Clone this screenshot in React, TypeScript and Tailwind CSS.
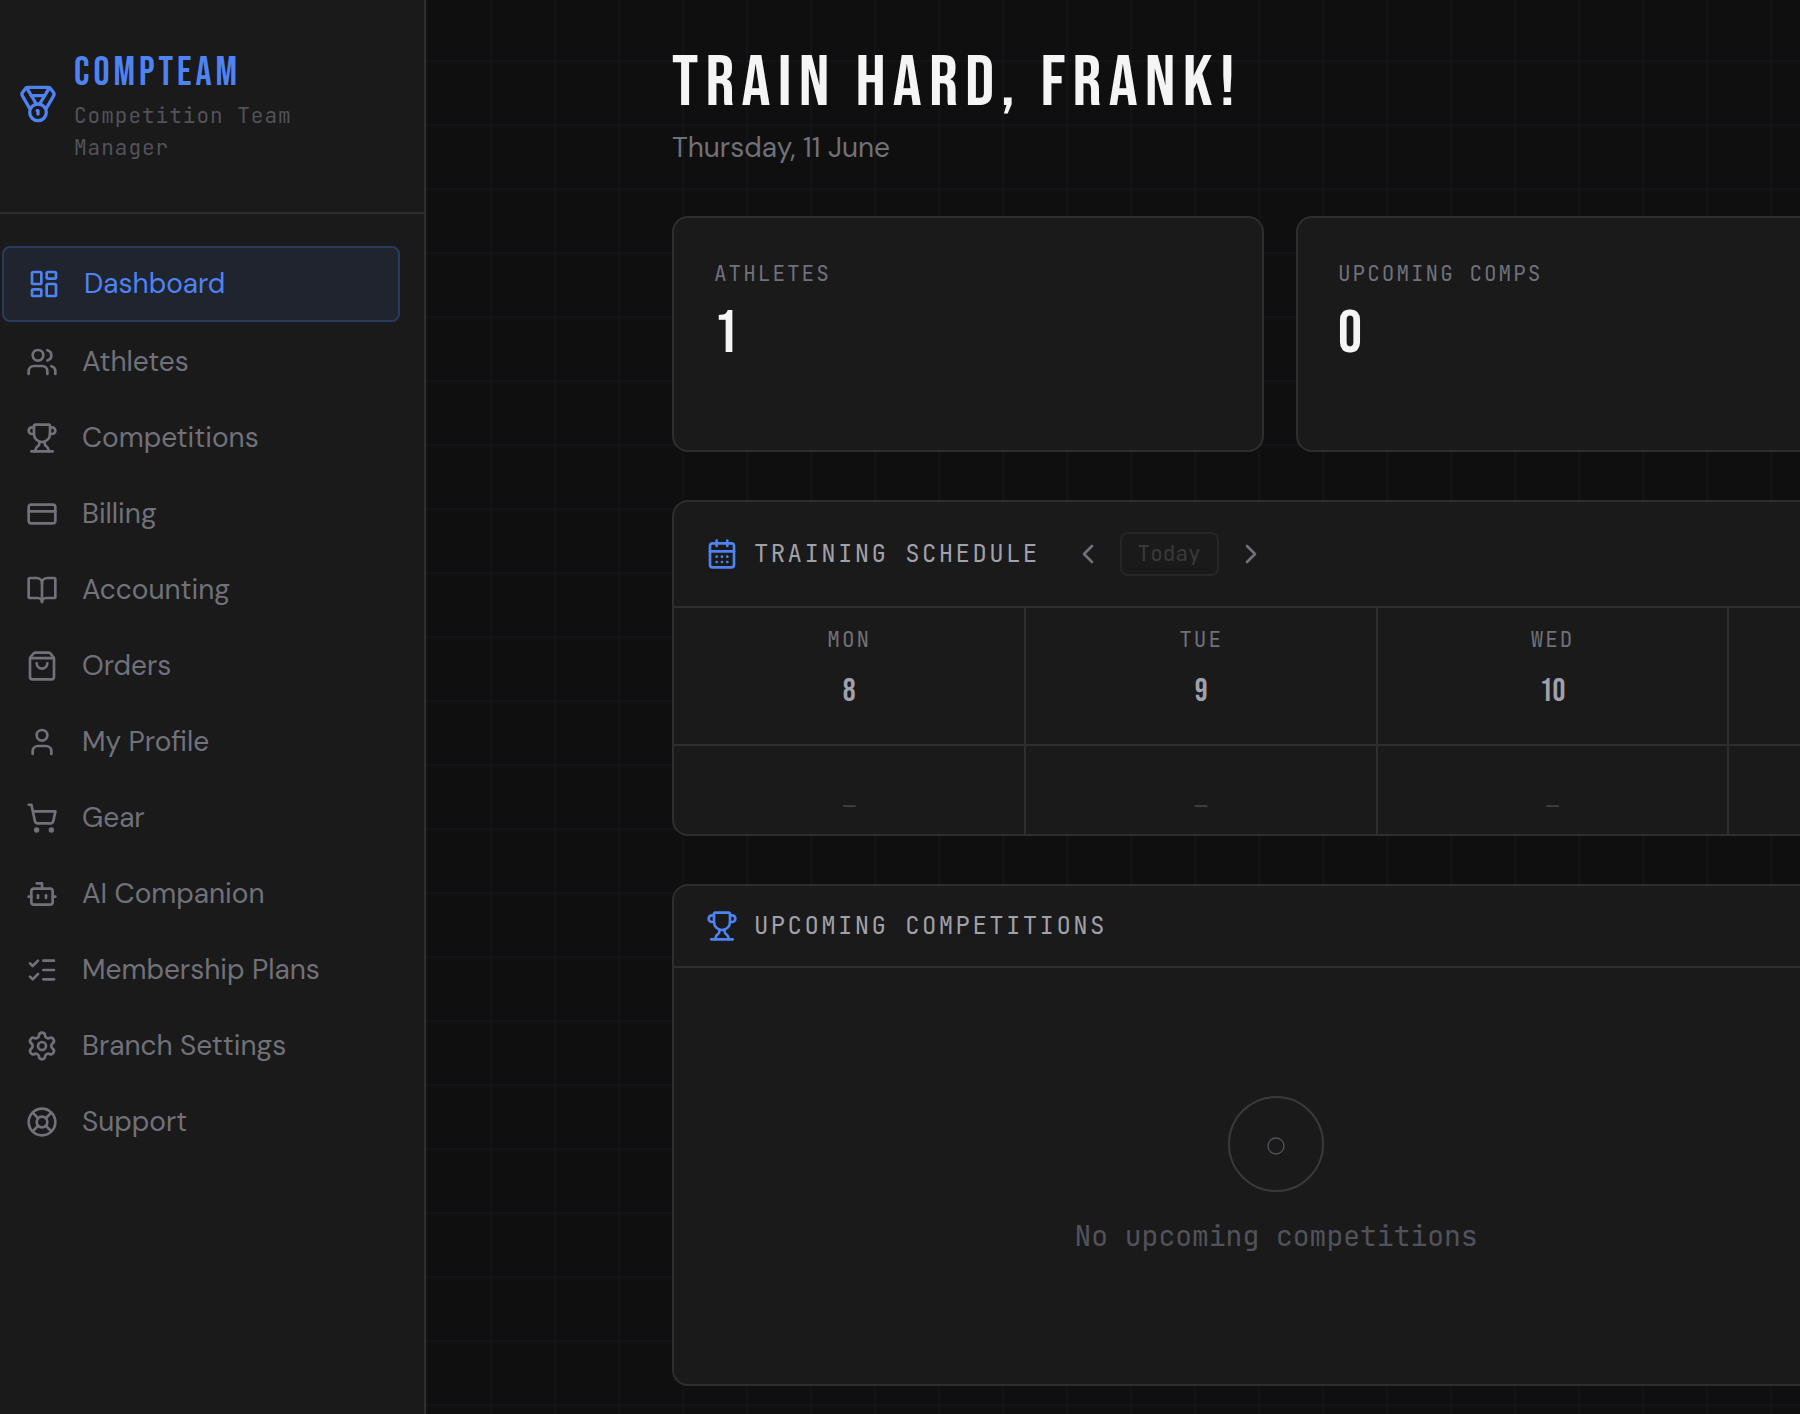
import {
  BookOpen,
  Bot,
  CalendarDays,
  ChevronLeft,
  ChevronRight,
  CreditCard,
  LayoutDashboard,
  LifeBuoy,
  ListChecks,
  Medal,
  Settings,
  ShoppingBag,
  ShoppingCart,
  Trophy,
  User,
  Users,
  type LucideIcon,
} from "lucide-react";

type NavItem = { label: string; icon: LucideIcon; active?: boolean };

const navItems: NavItem[] = [
  { label: "Dashboard", icon: LayoutDashboard, active: true },
  { label: "Athletes", icon: Users },
  { label: "Competitions", icon: Trophy },
  { label: "Billing", icon: CreditCard },
  { label: "Accounting", icon: BookOpen },
  { label: "Orders", icon: ShoppingBag },
  { label: "My Profile", icon: User },
  { label: "Gear", icon: ShoppingCart },
  { label: "AI Companion", icon: Bot },
  { label: "Membership Plans", icon: ListChecks },
  { label: "Branch Settings", icon: Settings },
  { label: "Support", icon: LifeBuoy },
];

const stats = [
  { label: "Athletes", value: 1 },
  { label: "Upcoming comps", value: 0 },
];

const days = [
  { day: "Mon", date: 8 },
  { day: "Tue", date: 9 },
  { day: "Wed", date: 10 },
];

function NavLink({ label, icon: Icon, active }: NavItem) {
  return (
    <a
      href="#"
      aria-current={active ? "page" : undefined}
      className={
        active
          ? "flex items-center gap-6 rounded-lg border-2 border-[#293a60] bg-[#20242f] px-6 py-5 text-[#4f83f1]"
          : "flex items-center gap-6 rounded-lg px-6 py-5 text-[#71717a]"
      }
    >
      <Icon className="size-8 shrink-0" />
      <span className="text-[28px] leading-8">{label}</span>
    </a>
  );
}

function Sidebar() {
  return (
    <aside className="w-[426px] shrink-0 border-r-2 border-[#2e2e2e] bg-[#1a1a1a]">
      <div className="flex items-center gap-4 border-b-2 border-[#2e2e2e] pt-11 pr-12 pb-12 pl-[18px]">
        <Medal className="size-10 shrink-0 text-[#4f83f1]" />
        <div>
          <p className="pt-0.5 font-['Bebas_Neue','Open_Sans_Condensed',sans-serif] text-[40px] leading-[54px] tracking-widest text-[#4f83f1]">
            COMPTEAM
          </p>
          <p className="font-['JetBrains_Mono','DejaVu_Sans_Mono',monospace] text-[21px] leading-8 tracking-[1px] text-[#52525b]">
            Competition Team Manager
          </p>
        </div>
      </div>
      <nav className="flex flex-col gap-1 pt-8 pr-6 pb-8 pl-0.5">
        {navItems.map((item) => (
          <NavLink key={item.label} {...item} />
        ))}
      </nav>
    </aside>
  );
}

function PanelTitle({ icon: Icon, title }: { icon: LucideIcon; title: string }) {
  return (
    <div className="flex items-center gap-4">
      <Icon className="size-8 shrink-0 text-[#4f83f1]" />
      <h2 className="font-['JetBrains_Mono','DejaVu_Sans_Mono',monospace] text-2xl tracking-widest text-[#a1a1aa] uppercase">
        {title}
      </h2>
    </div>
  );
}

function Schedule() {
  return (
    <section className="overflow-hidden rounded-2xl border-2 border-[#2e2e2e] bg-[#1a1a1a]">
      <header className="flex items-center gap-8 border-b-2 border-[#2e2e2e] px-8 py-[30px]">
        <PanelTitle icon={CalendarDays} title="Training Schedule" />
        <div className="flex items-center gap-4">
          <button type="button" aria-label="Previous week" className="text-[#71717a]">
            <ChevronLeft className="size-8" />
          </button>
          <button
            type="button"
            disabled
            className="h-11 rounded-lg border-2 border-[#262626] px-4 font-['JetBrains_Mono','DejaVu_Sans_Mono',monospace] text-[21px] leading-8 text-[#3a3a3c]"
          >
            Today
          </button>
          <button type="button" aria-label="Next week" className="text-[#71717a]">
            <ChevronRight className="size-8" />
          </button>
        </div>
      </header>
      <table className="w-full table-fixed">
        <thead>
          <tr className="border-b-2 border-[#2e2e2e]">
            {days.map(({ day, date }) => (
              <th key={day} scope="col" className="w-1/7 border-r-2 border-[#2e2e2e] pt-4 pb-7 font-normal">
                <span className="block font-['JetBrains_Mono','DejaVu_Sans_Mono',monospace] text-[21px] leading-8 tracking-[2px] text-[#71717a] uppercase">
                  {day}
                </span>
                <span className="mt-3 block font-['Bebas_Neue','Open_Sans_Condensed',sans-serif] text-[32px] leading-12 text-[#a1a1aa]">
                  {date}
                </span>
              </th>
            ))}
            <td />
          </tr>
        </thead>
        <tbody>
          <tr>
            {days.map(({ day }) => (
              <td
                key={day}
                className="border-r-2 border-[#2e2e2e] pt-11 pb-3 text-center font-['JetBrains_Mono','DejaVu_Sans_Mono',monospace] text-[21px] leading-8 text-[#3f3f46]"
              >
                —
              </td>
            ))}
            <td />
          </tr>
        </tbody>
      </table>
    </section>
  );
}

function UpcomingCompetitions() {
  return (
    <section className="overflow-hidden rounded-2xl border-2 border-[#2e2e2e] bg-[#1a1a1a]">
      <header className="border-b-2 border-[#2e2e2e] px-8 py-6">
        <PanelTitle icon={Trophy} title="Upcoming Competitions" />
      </header>
      <div className="flex flex-col items-center py-32">
        <div className="flex size-24 items-center justify-center rounded-full border-2 border-[#3a3a3a] pt-1 text-[#52525b]">
          <svg viewBox="0 0 18 18" className="size-[18px]" fill="none" stroke="currentColor" strokeWidth="1.3" aria-hidden="true">
            <circle cx="9" cy="9" r="8" />
          </svg>
        </div>
        <p className="mt-6 font-['JetBrains_Mono','DejaVu_Sans_Mono',monospace] text-[28px] leading-10 text-[#52525b]">
          No upcoming competitions
        </p>
      </div>
    </section>
  );
}

export default function App() {
  return (
    <div className="flex min-h-screen overflow-hidden bg-[#0f0f0f] font-['DM_Sans','Inter',sans-serif]">
      <Sidebar />
      <main className="min-w-0 flex-1 overflow-hidden bg-[linear-gradient(rgba(79,131,241,0.04)_2px,transparent_2px),linear-gradient(90deg,rgba(79,131,241,0.04)_2px,transparent_2px)] bg-size-[64px_64px] bg-position-[0px_-4px] pt-12 pl-[246px]">
        <div className="w-[2464px]">
          <h1 className="font-['Bebas_Neue','Open_Sans_Condensed',sans-serif] text-7xl leading-[72px] tracking-widest text-[#f5f5f5]">
            TRAIN HARD, FRANK!
          </h1>
          <p className="mt-2 text-[28px] leading-10 text-[#71717a]">Thursday, 11 June</p>

          <div className="mt-12 grid grid-cols-4 gap-8">
            {stats.map(({ label, value }) => (
              <section key={label} className="min-h-[236px] rounded-2xl border-2 border-[#2e2e2e] bg-[#1a1a1a] p-10">
                <h2 className="font-['JetBrains_Mono','DejaVu_Sans_Mono',monospace] text-[21px] leading-8 tracking-[2px] text-[#71717a] uppercase">
                  {label}
                </h2>
                <p className="mt-3.5 font-['Bebas_Neue','Open_Sans_Condensed',sans-serif] text-6xl leading-[60px] text-[#f5f5f5]">
                  {value}
                </p>
              </section>
            ))}
          </div>

          <div className="mt-12">
            <Schedule />
          </div>

          <div className="mt-12 grid grid-cols-2 gap-12">
            <UpcomingCompetitions />
          </div>
        </div>
      </main>
    </div>
  );
}
